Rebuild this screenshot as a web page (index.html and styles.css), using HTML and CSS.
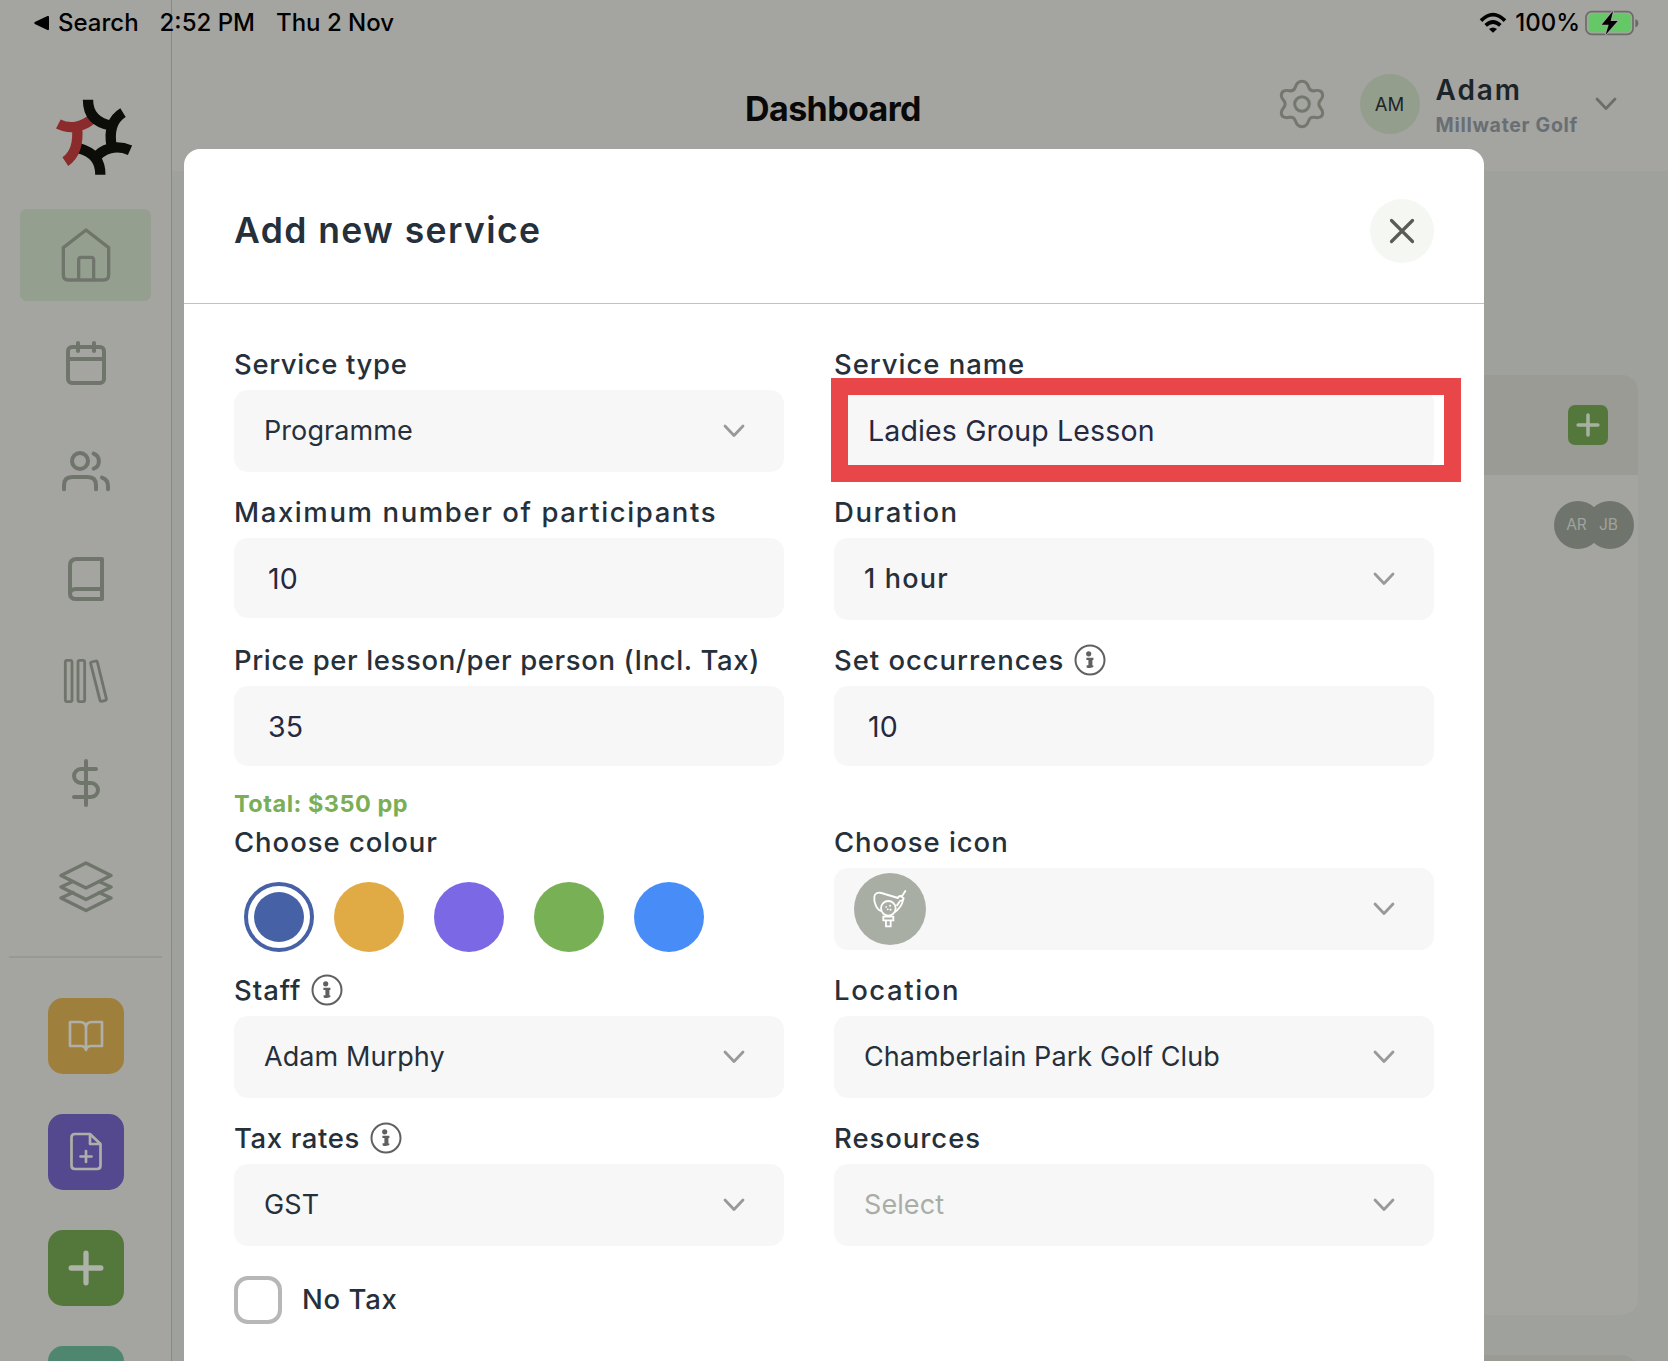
FILE: index.html
```
<!DOCTYPE html>
<html lang="en">

<head>
    <meta charset="UTF-8">
    <meta name="viewport" content="width=device-width, initial-scale=1.0">
    <title>Dashboard</title>
    <link rel="stylesheet" href="styles.css">
</head>

<body>
    <!-- shared icons -->
    <svg class="hidden" width="0" height="0">
        <symbol id="chevron" viewBox="0 0 22 14">
            <path d="M2 2l9 9.500 9-9.500" fill="none" stroke="currentColor" stroke-width="2.800" stroke-linecap="round" stroke-linejoin="round" />
        </symbol>
        <symbol id="info" viewBox="0 0 32 32">
            <circle cx="16" cy="16" r="14.500" fill="none" stroke="currentColor" stroke-width="2" />
            <circle cx="14.700" cy="9.800" r="2.600" fill="currentColor" />
            <path d="M12.400 13.800h7v2.200h-1v5.400h1v1.400c-1 1.300-4.600 1.500-6.800.6v-2.100h1.800v-5.300h-2z" fill="currentColor" />
        </symbol>
        <symbol id="plus" viewBox="0 0 34 34">
            <path d="M17 3v28M3 17h28" fill="none" stroke="currentColor" stroke-width="5" stroke-linecap="round" />
        </symbol>
    </svg>

    <div class="status-bar">
        <svg class="back" width="16" height="16" viewBox="0 0 16 16">
            <path d="M.8 7q-1 1 0 2l12.700 6q1.500.5 1.500-1V2q0-1.500-1.500-1z" />
        </svg>
        <span class="status-search">Search</span>
        <span class="status-time">2:52 PM</span>
        <span>Thu 2 Nov</span>
        <div class="status-right">
            <svg width="28" height="21" viewBox="717 37 84 63">
                <path d="M723 63q36-36 72 0M737 77q22-20 44 0" fill="none" stroke="#000" stroke-width="11" />
                <path d="M747 88q12-9 24 0l-12 11z" />
            </svg>
            <span class="percent">100%</span>
            <svg width="54" height="26" viewBox="1034 30 162 78">
                <rect x="1037" y="35" width="141" height="68" rx="17" fill="none" stroke="#6b6b69" stroke-width="5" />
                <rect x="1045" y="42" width="126" height="55" rx="10" fill="#64c866" />
                <path d="M1185 58q9 2 9 12t-9 12z" fill="#6b6b69" />
                <path d="M1118 33l-34 41h21l-9 30 36-41h-21z" stroke="#a4a4a1" stroke-width="6" paint-order="stroke" />
            </svg>
        </div>
    </div>

    <div class="app">
        <aside class="sidebar">
            <svg class="logo" width="80" height="80" viewBox="162 292 240 240" fill="none" stroke-width="31">
                <path stroke="#0c0c09" d="M301 525c0-40-18-66-64-79" />
                <path stroke="#8c2b2c" d="M175 373c32 16 72 12 104-18M196 486c30-20 40-56 35-106" />
                <path stroke="#0c0c09" d="M264 300c0 42 22 70 72 78M369 339c-36 22-42 58-34 102M390 452c-40-18-82-8-108 28" />
            </svg>
            <nav class="nav">
                <a class="nav-item active">
                    <svg width="52" height="56" viewBox="180 681 156 168" stroke-width="10">
                        <path d="M190 743l68-53 68 53v82q0 15-15 15H205q-15 0-15-15z" />
                        <path d="M236 838v-58q0-8 8-8h29q8 0 8 8v58" />
                    </svg>
                </a>
                <a class="nav-item">
                    <svg width="40" height="44" viewBox="198 93 120 132" stroke-width="12">
                        <rect x="204" y="111" width="108" height="108" rx="12" />
                        <path d="M204 147h108M234 99v24M282 99v24" />
                    </svg>
                </a>
                <a class="nav-item">
                    <svg width="50" height="42" viewBox="183 420 150 126" stroke-width="12">
                        <circle cx="240" cy="453" r="24" />
                        <path d="M281 431a24 24 0 0 1 0 45M192 538v-12q0-25 25-25h46q25 0 25 25v12M306 503q18 6 18 25v10" />
                    </svg>
                </a>
                <a class="nav-item">
                    <svg width="36" height="44" viewBox="204 741 108 132" stroke-width="12">
                        <path d="M306 747h-76q-20 0-20 20v84q0 16 20 16h76zM210 852q0-15 18-15h78" />
                    </svg>
                </a>
                <a class="nav-item short">
                    <svg width="46" height="44" viewBox="189 1047 138 132" stroke-width="8.500">
                        <rect x="196" y="1051" width="20" height="124" rx="5" />
                        <rect x="234" y="1051" width="20" height="124" rx="5" />
                        <path d="M275 1056l12-3q4-1 5 3l27 110q1 4-3 5l-11 3q-4 1-5-3l-28-110q-1-4 3-5z" />
                    </svg>
                </a>
                <a class="nav-item">
                    <svg width="48" height="48" viewBox="0 0 24 24" stroke-width="2">
                        <path d="M12 1v22M17 5H9.500a3.500 3.500 0 0 0 0 7h5a3.500 3.500 0 0 1 0 7H6" />
                    </svg>
                </a>
                <a class="nav-item last">
                    <svg width="54" height="54" viewBox="59 861 54 54" stroke-width="3.400">
                        <path d="M86 863l25 12.500-25 12.500-25-12.500zM73 881.500l-12 5.500 25 12.500 25-12.500-12-5.500M73 892.500l-12 5.500 25 12.500 25-12.500-12-5.500" />
                    </svg>
                </a>
            </nav>
            <div class="quick-links">
                <a class="quick yellow">
                    <svg width="40" height="40" viewBox="66 1017 40 40" stroke-width="2.700">
                        <path d="M70 1023h10q6 0 6 6 0-6 6-6h10v24H91q-4 0-5 4-1-4-5-4H70zM86 1029v20" />
                    </svg>
                </a>
                <a class="quick purple">
                    <svg width="40" height="40" viewBox="66 1133 40 40" stroke-width="2.700">
                        <path d="M90 1135H75q-3.500 0-3.500 3.500v28q0 3.500 3.500 3.500h22q3.500 0 3.500-3.500V1145zM90 1135v10h10.500M86 1152v11M80.500 1157.500h11" />
                    </svg>
                </a>
                <a class="quick green"><svg width="36" height="36"><use href="#plus" /></svg></a>
                <a class="quick teal"></a>
            </div>
        </aside>

        <main class="main">
            <header class="topbar">
                <h1>Dashboard</h1>
                <div class="account">
                    <svg width="46" height="50" viewBox="117 237 138 150" fill="none" stroke="#73776d" stroke-width="9">
                        <path id="gear-half" d="M186 244c13 0 17 8 20 18 3 9 9 12 18 10 14-3 24 2 24 15 0 7-5 11-9 17-3 5-3 11 0 16 5 7 9 11 9 18 0 13-11 17-24 14-9-2-15 1-18 10-3 11-7 18-20 18" />
                        <use href="#gear-half" transform="translate(372 0) scale(-1 1)" />
                        <circle cx="186" cy="312" r="22" />
                    </svg>
                    <span class="avatar">AM</span>
                    <div class="account-text">
                        <div class="account-name">Adam</div>
                        <div class="account-club">Millwater Golf</div>
                    </div>
                    <svg class="account-chevron" width="22" height="14"><use href="#chevron" /></svg>
                </div>
            </header>
            <section class="card">
                <div class="card-head">
                    <span class="card-add"><svg width="24" height="24"><use href="#plus" /></svg></span>
                </div>
                <div class="card-body">
                    <span class="badge">AR</span>
                    <span class="badge">JB</span>
                </div>
            </section>
            <section class="card"><div class="card-head"></div></section>
        </main>
    </div>

    <div class="modal">
        <div class="modal-head">
            <h2>Add new service</h2>
            <button class="close">
                <svg width="26" height="26" viewBox="0 0 26 26">
                    <path d="M2.500 2.500l21 21M23.500 2.500l-21 21" stroke="#5a5a58" stroke-width="3.200" stroke-linecap="round" />
                </svg>
            </button>
        </div>
        <form class="form">
            <div class="field">
                <label class="tight">Service type</label>
                <div class="select">Programme <svg width="22" height="14"><use href="#chevron" /></svg></div>
            </div>
            <div class="field highlighted">
                <label>Service name</label>
                <input type="text" value="Ladies Group Lesson">
            </div>

            <div class="field">
                <label class="wide">Maximum number of participants</label>
                <input type="text" value="10">
            </div>
            <div class="field">
                <label class="wide">Duration</label>
                <div class="select duration">1 hour <svg width="22" height="14"><use href="#chevron" /></svg></div>
            </div>

            <div class="field">
                <label class="tight">Price per lesson/per person (Incl. Tax)</label>
                <input type="text" value="35">
                <div class="total">Total: $350 pp</div>
            </div>
            <div class="field">
                <label>Set occurrences <svg width="32" height="32"><use href="#info" /></svg></label>
                <input type="text" value="10">
            </div>

            <div class="field">
                <label>Choose colour</label>
                <div class="colours">
                    <span class="colour navy selected"></span>
                    <span class="colour amber"></span>
                    <span class="colour violet"></span>
                    <span class="colour leaf"></span>
                    <span class="colour sky"></span>
                </div>
            </div>
            <div class="field">
                <label>Choose icon</label>
                <div class="select icon-select">
                    <span class="icon-circle">
                        <svg width="36" height="40" viewBox="96 88 108 120" fill="none" stroke="#fff" stroke-width="5.500" stroke-linecap="round">
                            <path d="M123 154c-14-5-22-28-20-43 1-10 10-14 21-11l50 15M166 156c10-8 20-20 23-34M174 115q1-6 8-6l9 7q-1 6-6 7-6-1-8 6l-6 8M186 110l10-16" />
                            <circle cx="145" cy="146" r="22" />
                            <path d="M130 171h30v11h-30zM138 182v18h14v-18" />
                            <path d="M138 142h1M150 138h1M151 150h1M143 149h.5" stroke-width="5" />
                        </svg>
                    </span>
                    <svg width="22" height="14"><use href="#chevron" /></svg>
                </div>
            </div>

            <div class="field">
                <label>Staff <svg width="32" height="32"><use href="#info" /></svg></label>
                <div class="select">Adam Murphy <svg width="22" height="14"><use href="#chevron" /></svg></div>
            </div>
            <div class="field">
                <label class="wide">Location</label>
                <div class="select">Chamberlain Park Golf Club <svg width="22" height="14"><use href="#chevron" /></svg></div>
            </div>

            <div class="field">
                <label class="tight">Tax rates <svg width="32" height="32"><use href="#info" /></svg></label>
                <div class="select">GST <svg width="22" height="14"><use href="#chevron" /></svg></div>
            </div>
            <div class="field">
                <label>Resources</label>
                <div class="select placeholder">Select <svg width="22" height="14"><use href="#chevron" /></svg></div>
            </div>

            <div class="checkbox-row">
                <span class="checkbox"></span>
                <label class="tight">No Tax</label>
            </div>
        </form>
    </div>
</body>

</html>
```
FILE: styles.css
```
* {
    box-sizing: border-box;
}

body {
    margin: 0;
    height: 1361px;
    overflow: hidden;
    position: relative;
    font-family: "Inter", sans-serif;
    color: #25303b;
    background-color: #9fa19d;
}

.hidden {
    position: absolute;
}

/* status bar lies over the whole app */
.status-bar {
    position: absolute;
    top: 0;
    left: 0;
    right: 0;
    z-index: 2;
    height: 45px;
    padding: 0 29px 0 34px;
    display: flex;
    align-items: center;
    font-size: 24px;
    font-weight: 500;
    color: #000;
}

.status-search {
    margin-left: 8px;
}

.status-time {
    margin: 0 21px 0 21px;
}

.status-right {
    margin-left: auto;
    display: flex;
    align-items: center;
}

.percent {
    margin: 0 5px 0 8px;
}

.app {
    display: flex;
    height: 100%;
    overflow: hidden;
}

/* sidebar */
.sidebar {
    width: 172px;
    flex-shrink: 0;
    padding-top: 97px;
    background-color: #a4a4a1;
    border-right: 1px solid #858a84;
}

.logo {
    display: block;
    margin-left: 54px;
}

.nav {
    margin: 24px 9px 40px;
    padding-top: 8px;
    border-bottom: 2px solid #979995;
}

.nav-item {
    display: flex;
    align-items: center;
    justify-content: center;
    height: 108px;
}

.nav-item svg,
.quick svg {
    fill: none;
    stroke: #70756c;
    stroke-linecap: round;
    stroke-linejoin: round;
}

.nav-item.active {
    height: 92px;
    margin: 0 11px 8px;
    border-radius: 7px;
    background-color: #959f90;
}

.nav-item.short {
    height: 96px;
}

.nav-item.last {
    height: 119px;
    padding-bottom: 18px;
}

.quick-links {
    display: flex;
    flex-direction: column;
    align-items: center;
    gap: 40px;
}

.quick {
    display: flex;
    align-items: center;
    justify-content: center;
    width: 76px;
    height: 76px;
    border-radius: 15px;
    color: #adb3a6;
}

.quick svg {
    stroke: #afaea8;
}

.yellow {
    background-color: #9e7f3c;
}

.purple {
    background-color: #54498f;
}

.green {
    background-color: #54783c;
}

.teal {
    background-color: #4f866f;
}

/* page behind the dialog */
.main {
    flex: 1;
}

.topbar {
    display: grid;
    grid-template-columns: 1fr auto 1fr;
    height: 171px;
    padding: 0 50px 0 0;
    background-color: #a4a4a1;
}

h1 {
    grid-column: 2;
    margin: 89px 0 0 -124px;
    font-size: 34px;
    line-height: 40px;
    letter-spacing: -0.6px;
    color: #090909;
}

.account {
    display: flex;
    align-items: center;
    justify-content: flex-end;
    height: 60px;
    margin-top: 74px;
}

.avatar {
    width: 60px;
    height: 60px;
    margin: 0 16px 0 35px;
    border-radius: 50%;
    background-color: #949e8d;
    font-size: 18.5px;
    line-height: 60px;
    text-align: center;
    color: #1d2528;
}

.account-text {
    padding-top: 5px;
}

.account-name {
    font-size: 28px;
    font-weight: 600;
    line-height: 34px;
    letter-spacing: 1.9px;
    color: #1c2429;
}

.account-club {
    margin-top: 3px;
    font-size: 19.5px;
    font-weight: 700;
    line-height: 30px;
    letter-spacing: 0.7px;
    color: #696e73;
}

.account-chevron {
    margin-left: 17px;
    margin-right: 1px;
    color: #6d6e6c;
}

.card {
    width: 1436px;
    height: 940px;
    margin: 204px 30px 40px;
    border-radius: 16px;
    overflow: hidden;
    background-color: #a4a4a1;
}

.card + .card {
    margin-top: 0;
}

.card-head {
    display: flex;
    align-items: center;
    justify-content: flex-end;
    height: 100px;
    padding-right: 30px;
    background-color: #999b94;
}

.card-add {
    display: flex;
    align-items: center;
    justify-content: center;
    width: 40px;
    height: 40px;
    border-radius: 7px;
    background-color: #54783c;
    color: #a7b19f;
}

.card-body {
    display: flex;
    justify-content: flex-end;
    padding: 26px 4px;
}

.badge {
    width: 48px;
    height: 48px;
    margin-left: -16px;
    padding-right: 3px;
    border-radius: 50%;
    background-color: #6f756c;
    font-size: 15.5px;
    line-height: 48px;
    text-align: center;
    color: #a0a39d;
}

/* dialog */
.modal {
    position: absolute;
    top: 149px;
    left: 184px;
    width: 1300px;
    height: 1212px;
    border-radius: 16px 16px 0 0;
    background-color: #fff;
}

.modal-head {
    display: flex;
    align-items: center;
    justify-content: space-between;
    padding: 50px 50px 40px;
    border-bottom: 1px solid #c0c1c0;
}

h2 {
    margin: 0 0 2px;
    font-size: 35.5px;
    font-weight: 600;
    letter-spacing: 1.4px;
}

.close {
    display: flex;
    align-items: center;
    justify-content: center;
    width: 64px;
    height: 64px;
    padding: 0;
    border: none;
    border-radius: 50%;
    background-color: #f5f8f2;
}

.form {
    display: grid;
    grid-template-columns: 550px 600px;
    grid-template-rows: 148px 148px 182px 148px 148px 148px;
    column-gap: 50px;
    padding: 46px 50px 0;
}

label {
    display: flex;
    align-items: center;
    gap: 10px;
    height: 30px;
    margin-bottom: 10px;
    padding-bottom: 2px;
    font-size: 27.5px;
    font-weight: 500;
    line-height: 28px;
    letter-spacing: 0.95px;
    white-space: nowrap;
}

label svg {
    flex-shrink: 0;
    color: #5f605f;
}

.tight {
    letter-spacing: 0.62px;
}

.wide {
    letter-spacing: 1.6px;
}

.field {
    position: relative;
}

input {
    display: block;
    width: 100%;
    height: 80px;
    padding: 0 34px;
    border: none;
    border-radius: 14px;
    background-color: #f7f7f7;
    font-family: inherit;
    font-size: 28.5px;
    letter-spacing: 0.15px;
    color: #26293f;
}

.select {
    display: flex;
    align-items: center;
    justify-content: space-between;
    height: 82px;
    padding: 0 39px 2px 30px;
    border-radius: 14px;
    background-color: #f7f7f7;
    font-size: 27px;
    letter-spacing: 0.08px;
}

.select > svg {
    margin-top: 1px;
    color: #999;
}

.duration {
    padding-bottom: 1px;
    font-weight: 500;
    letter-spacing: 1.2px;
}

.placeholder {
    color: #a9ada6;
}

/* red frame drawn round the field */
.highlighted::after {
    content: "";
    position: absolute;
    box-sizing: border-box;
    top: 28px;
    left: -3px;
    width: 630px;
    height: 104px;
    border: 17px solid #e84649;
}

.total {
    margin-top: 23px;
    font-size: 23.5px;
    font-weight: 700;
    line-height: 30px;
    letter-spacing: 0.5px;
    color: #7aaf57;
}

.colours {
    display: flex;
    gap: 30px;
    padding: 14px 10px;
}

.colour {
    width: 70px;
    height: 70px;
    border-radius: 50%;
}

.selected {
    margin-right: -10px;
    border: 4px solid #4661a5;
    padding: 6px;
    background-clip: content-box;
}

.navy {
    background-color: #4661a5;
}

.amber {
    background-color: #e0aa44;
}

.violet {
    background-color: #7b68e4;
}

.leaf {
    background-color: #78b055;
}

.sky {
    background-color: #488cf7;
}

.icon-select {
    padding-left: 20px;
    padding-bottom: 1px;
}

.icon-circle {
    display: flex;
    align-items: center;
    justify-content: center;
    width: 72px;
    height: 72px;
    border-radius: 50%;
    background-color: #a9aea5;
}

.checkbox-row {
    display: flex;
    gap: 20px;
    padding-top: 4px;
}

.checkbox-row label {
    height: 48px;
    margin: 0;
}

.checkbox {
    width: 48px;
    height: 48px;
    border: 4px solid #b7b7b7;
    border-radius: 14px;
}
```
